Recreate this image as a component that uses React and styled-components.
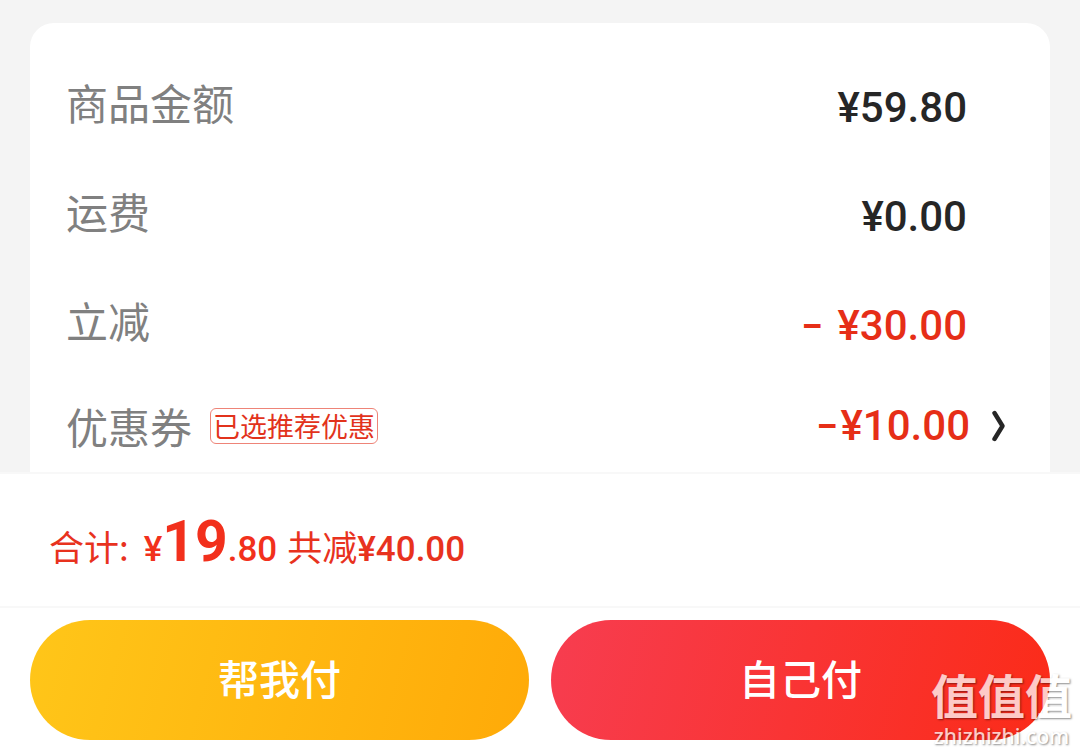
import styled, { createGlobalStyle } from "styled-components";

const rows = [
  { label: "商品金额", value: "¥59.80" },
  { label: "运费", value: "¥0.00" },
  { label: "立减", sign: "–", value: "¥30.00", discount: true, spaced: true },
];

export default function App() {
  return (
    <>
      <GlobalStyle />
      <Page>
        <Card>
          {rows.map((row) => (
            <Row key={row.label}>
              <Label>{row.label}</Label>
              <Price discount={row.discount}>
                {row.sign && <Sign spaced={row.spaced}>{row.sign}</Sign>}
                {row.value}
              </Price>
            </Row>
          ))}
          <CouponRow>
            <Label>优惠券</Label>
            <Tag>已选推荐优惠</Tag>
            <CouponButton type="button">
              <Price discount>
                <Sign>–</Sign>
                ¥10.00
              </Price>
              <Chevron />
            </CouponButton>
          </CouponRow>
        </Card>
        <Total>
          <span>合计:</span>
          <Amount>
            ¥<Big>19</Big>.80
          </Amount>
          <span>
            共减<Saved>¥40.00</Saved>
          </span>
        </Total>
        <Actions>
          <PayButton type="button">帮我付</PayButton>
          <SelfPayButton type="button">自己付</SelfPayButton>
        </Actions>
        <Watermark>
          <Brand>值值值</Brand>
          <Site>zhizhizhi.com</Site>
        </Watermark>
      </Page>
    </>
  );
}

function Chevron() {
  return (
    <svg width="14" height="32" viewBox="0 0 14 32" fill="none" aria-hidden="true">
      <path d="M2.5 3 L10.5 16 L2.5 29" stroke="#262626" strokeWidth="4.4" strokeLinecap="round" strokeLinejoin="round" />
    </svg>
  );
}

const GlobalStyle = createGlobalStyle`
  * {
    box-sizing: border-box;
  }
  body {
    margin: 0;
    background: #f4f4f4;
    font-family: Roboto, "Noto Sans CJK SC", sans-serif;
  }
  button {
    font-family: inherit;
    border: none;
    padding: 0;
    cursor: pointer;
  }
`;

const Page = styled.main`
  position: relative;
  padding-top: 23px;
`;

const Card = styled.section`
  margin: 0 30px;
  padding: 30px 37px 0 36px;
  background: #fff;
  border-radius: 24px 24px 0 0;
`;

const Label = styled.span`
  padding-bottom: 12px;
  color: #808080;
  font-family: "Noto Sans CJK SC", sans-serif;
  font-size: 42px;
  line-height: 60px;
`;

const Row = styled.div`
  display: flex;
  align-items: center;
  height: 109px;
  padding-right: 46px;
`;

const CouponRow = styled(Row)`
  height: 92px;
  padding-right: 7px;

  ${Label} {
    padding-bottom: 0;
  }
`;

const Price = styled.span`
  margin-left: auto;
  color: ${(props) => (props.discount ? "#e62e17" : "#262626")};
  font-size: 42px;
  font-weight: 500;
  line-height: 60px;
`;

const Sign = styled.span`
  margin-right: ${(props) => (props.spaced ? "16px" : "4px")};
  font-size: 32px;
  font-weight: 900;
  line-height: 32px;
  vertical-align: 3px;
`;

const Tag = styled.span`
  margin-left: 18px;
  padding: 0 2px;
  border: 1px solid #ee8478;
  border-radius: 6px;
  color: #e2331c;
  font-family: "Noto Sans CJK SC", sans-serif;
  font-size: 27px;
  line-height: 34px;
`;

const CouponButton = styled.button`
  display: flex;
  align-items: center;
  gap: 22px;
  margin-left: auto;
  background: none;
`;

const Total = styled.section`
  display: flex;
  align-items: baseline;
  height: 134px;
  padding: 26px 49px 0;
  background: #fff;
  border-top: 2px solid #f8f8f8;
  color: #e8321e;
  font-family: "Noto Sans CJK SC", sans-serif;
  font-size: 35px;
  line-height: 84px;
`;

const Amount = styled.span`
  margin: 0 10px 0 15px;
  color: #f2301c;
  font-family: Roboto, sans-serif;
  font-weight: 500;
`;

const Big = styled.strong`
  font-size: 57px;
  font-weight: 700;
`;

const Saved = styled.span`
  font-family: Roboto, sans-serif;
  font-weight: 500;
`;

const Actions = styled.footer`
  display: flex;
  gap: 22px;
  padding: 12px 30px;
  background: #fff;
  border-top: 2px solid #f8f8f8;
`;

const PayButton = styled.button`
  flex: 1;
  height: 120px;
  padding-bottom: 6px;
  border-radius: 60px;
  background: linear-gradient(105deg, #ffc619, #ffaa08);
  color: #fff;
  font-size: 41px;
  font-weight: 500;
`;

const SelfPayButton = styled(PayButton)`
  background: linear-gradient(105deg, #f73d50, #fb2b18);
`;

const Watermark = styled.div`
  position: absolute;
  right: 8px;
  bottom: 4px;
  display: flex;
  flex-direction: column;
  align-items: center;
  color: #fff;
  text-shadow: 1px 1px 2px rgba(0, 0, 0, 0.6);
  opacity: 0.75;
  pointer-events: none;
`;

const Brand = styled.span`
  font-family: "Noto Sans CJK SC", sans-serif;
  font-size: 47px;
  font-weight: 700;
  line-height: 60px;
`;

const Site = styled.span`
  font-family: "Noto Sans", sans-serif;
  font-size: 21px;
  font-weight: 500;
  line-height: 24px;
`;
